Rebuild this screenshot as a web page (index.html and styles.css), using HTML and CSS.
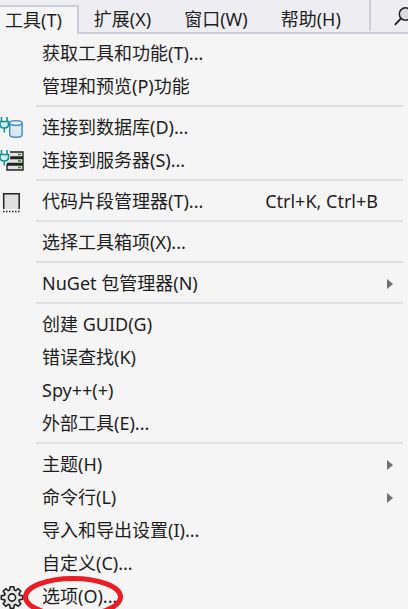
FILE: index.html
```
<!DOCTYPE html>
<html lang="zh-CN">
<head>
<meta charset="utf-8">
<title>工具</title>
<link rel="stylesheet" href="styles.css">
</head>
<body>
<header class="menubar">
  <nav class="tabs">
    <button class="tab active">工具(T)</button>
    <button class="tab">扩展(X)</button>
    <button class="tab">窗口(W)</button>
    <button class="tab">帮助(H)</button>
  </nav>
  <button class="search" aria-label="搜索">
    <svg width="24" height="24" viewBox="0 0 24 24" fill="none"><circle cx="15.500" cy="10" r="6.200" fill="#dcdce0" stroke="#222" stroke-width="1.500"/><path d="M11 14.500 4.800 20.800" stroke="#222" stroke-width="1.800"/></svg>
  </button>
</header>
<main class="menu">
  <button class="item"><span class="icon"></span><span class="label">获取工具和功能(T)...</span></button>
  <button class="item"><span class="icon"></span><span class="label">管理和预览(P)功能</span></button>
  <hr>
  <button class="item"><span class="icon">
    <svg width="24" height="24" viewBox="0 0 24 24" fill="none"><path d="M9.700 7v11.500c0 1.600 2.800 2.800 6.200 2.800s6.200-1.200 6.200-2.800V7" fill="#dce8f5" stroke="#3a87d0" stroke-width="1.400"/><ellipse cx="15.900" cy="7" rx="6.200" ry="2.400" fill="#eaf2fa" stroke="#3a87d0" stroke-width="1.400"/><path d="M0 5.500v3C0 11 2 12 4.300 12S8.500 11 8.500 8.500v-3" fill="#d5e9e9"/><path d="M-1 5.500H9.500M1.500 5V1M7 5V1M0 6v2.500C0 11 2 12 4.300 12S8.500 11 8.500 8.500V6M4.300 12v4.500" stroke="#159090" stroke-width="1.600"/></svg>
  </span><span class="label">连接到数据库(D)...</span></button>
  <button class="item"><span class="icon">
    <svg width="24" height="24" viewBox="0 0 24 24" fill="none"><path d="M10 3h13v5H10M7 9.500h16v5H7M7 16h16v5H7z" fill="#e2e2e2" stroke="#222" stroke-width="1.400"/><path d="M18 5.500h3M18 12h3M18 18.500h3" stroke="#219521" stroke-width="1.600"/><path d="M-1 5.500H9.500M0 6v2.500C0 11 2 12 4.300 12S8.500 11 8.500 8.500V6M4.300 12v4.500" stroke="#f5f5f5" stroke-width="3.500"/><path d="M0 5.500v3C0 11 2 12 4.300 12S8.500 11 8.500 8.500v-3" fill="#d5e9e9"/><path d="M-1 5.500H9.500M1.500 5V1M7 5V1M0 6v2.500C0 11 2 12 4.300 12S8.500 11 8.500 8.500V6M4.300 12v4.500" stroke="#159090" stroke-width="1.600"/></svg>
  </span><span class="label">连接到服务器(S)...</span></button>
  <hr>
  <button class="item"><span class="icon">
    <svg width="24" height="24" viewBox="0 0 24 24" fill="none"><path d="M3.700 19V3.700h15.500V19" fill="#e0e0e0" stroke="#222" stroke-width="1.500"/><path d="M3 21.500h17" stroke="#222" stroke-width="1.500" stroke-dasharray="1.500 1.500"/></svg>
  </span><span class="label">代码片段管理器(T)...</span><kbd>Ctrl+K, Ctrl+B</kbd></button>
  <hr>
  <button class="item"><span class="icon"></span><span class="label">选择工具箱项(X)...</span></button>
  <hr>
  <button class="item"><span class="icon"></span><span class="label">NuGet 包管理器(N)</span><span class="arrow"></span></button>
  <hr>
  <button class="item"><span class="icon"></span><span class="label">创建 GUID(G)</span></button>
  <button class="item"><span class="icon"></span><span class="label">错误查找(K)</span></button>
  <button class="item"><span class="icon"></span><span class="label">Spy++(+)</span></button>
  <button class="item"><span class="icon"></span><span class="label">外部工具(E)...</span></button>
  <hr>
  <button class="item"><span class="icon"></span><span class="label">主题(H)</span><span class="arrow"></span></button>
  <button class="item"><span class="icon"></span><span class="label">命令行(L)</span><span class="arrow"></span></button>
  <button class="item"><span class="icon"></span><span class="label">导入和导出设置(I)...</span></button>
  <button class="item"><span class="icon"></span><span class="label">自定义(C)...</span></button>
  <button class="item"><span class="icon">
    <svg width="24" height="24" viewBox="0 0 24 24" fill="none" stroke="#222" stroke-width="1.600" stroke-linejoin="round"><path d="M10.200 1.800h3.600l.6 3.300 1.200.5 2.700-1.900 2.500 2.500-1.900 2.700.5 1.200 3.300.6v3.600l-3.300.6-.5 1.200 1.900 2.700-2.500 2.500-2.700-1.900-1.200.5-.6 3.300h-3.600l-.6-3.300-1.200-.5-2.700 1.900-2.500-2.500 1.900-2.700-.5-1.200-3.300-.6v-3.600l3.300-.6.5-1.200-1.900-2.700 2.500-2.500 2.700 1.900 1.200-.5z" fill="#e4e4e4"/><circle cx="12" cy="12.500" r="3.600" fill="#f5f5f5"/></svg>
  </span><span class="label">选项(O)...</span>
    <svg class="mark" width="104" height="46" viewBox="0 0 104 46" fill="none"><ellipse cx="52" cy="23" rx="47.500" ry="18.500" stroke="#ed1c24" stroke-width="5"/></svg>
  </button>
</main>
</body>
</html>
```
FILE: styles.css
```
* { box-sizing: border-box; }
body {
  margin: 0;
  height: 100vh;
  overflow: hidden;
  background: #f5f5f5;
  color: #1e1e1e;
  font: 18px/24px "Noto Sans", "Noto Sans CJK SC", sans-serif;
}
button {
  margin: 0;
  padding: 0;
  border: 0;
  background: none;
  color: inherit;
  font: inherit;
  text-align: left;
  white-space: nowrap;
}
.menubar {
  display: flex;
  height: 34px;
  background: #eeeef2;
  box-shadow: inset 0 -2px #cccedb;
}
.tabs {
  display: flex;
  flex: 1;
  padding-top: 5px;
}
.tab { padding: 0 18px 2px 15px; }
.tab.active {
  padding: 0 15px 2px 5px;
  border-top: 2px solid #cccedb;
  border-right: 2px solid #cccedb;
  background: #f5f5f5;
}
.search {
  width: 39px;
  height: 31px;
  padding-left: 19px;
  border-left: 2px solid #cccedb;
  overflow: hidden;
}
.search svg { display: block; }
.menu { padding-top: 3px; }
.item {
  position: relative;
  display: flex;
  align-items: center;
  width: 100%;
  height: 33px;
}
.icon {
  flex: none;
  width: 42px;
  height: 24px;
}
.icon svg { display: block; }
.label {
  flex: 1;
  padding-bottom: 2px;
}
kbd {
  margin-right: 30px;
  padding-bottom: 2px;
  font: inherit;
}
.arrow {
  margin-right: 15px;
  border: 5px solid transparent;
  border-left: 6px solid #717171;
  border-right: 0;
}
hr {
  height: 2px;
  margin: 2px 5px 4px 36px;
  border: 0;
  background: #dee1e5;
}
.mark {
  position: absolute;
  left: 21px;
  top: -6px;
}
```
